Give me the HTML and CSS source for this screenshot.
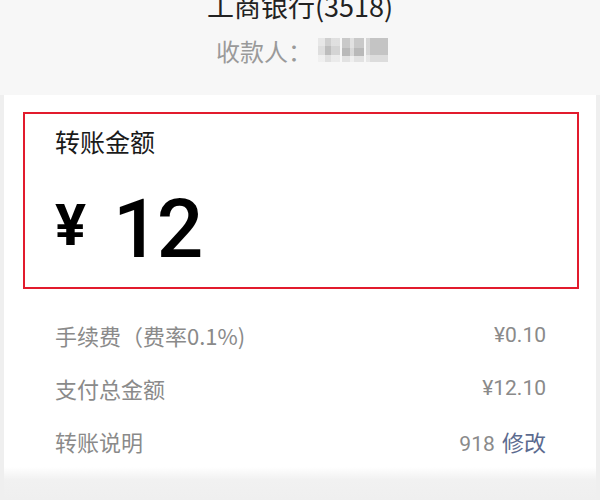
FILE: index.html
```html
<!DOCTYPE html>
<html lang="zh">
<head>
<meta charset="utf-8">
<link rel="stylesheet" href="styles.css">
</head>
<body>
<div class="page">
  <header class="head">
    <div class="bank">工商银行(3518)</div>
    <div class="payee">
      <span class="payee-label">收款人：</span>
      <span class="blur"><i class="b1"></i><i class="b2"></i><i class="b3"></i></span>
    </div>
  </header>
  <section class="card">
    <div class="amount-box">
      <div class="amount-label">转账金额</div>
      <div class="amount">
        <span class="yen">¥</span>
        <span class="num">12</span>
      </div>
    </div>
    <div class="rows">
      <div class="row"><span class="k">手续费（费率0.1%)</span><span class="v">¥0.10</span></div>
      <div class="row"><span class="k">支付总金额</span><span class="v">¥12.10</span></div>
      <div class="row"><span class="k">转账说明</span><span class="v">918 <span class="edit">修改</span></span></div>
    </div>
  </section>
</div>
</body>
</html>
```

FILE: styles.css
```css
* { box-sizing: border-box; margin: 0; padding: 0; }
html, body { width: 600px; height: 500px; overflow: hidden; }
body {
  background: #efefef;
  font-family: "Roboto", "Noto Sans CJK SC", sans-serif;
}
.page {
  height: 500px;
  display: flex;
  flex-direction: column;
}
.head {
  background: #f7f7f7;
  height: 95px;
  display: flex;
  flex-direction: column;
  align-items: center;
}
.bank {
  font-family: "Noto Sans CJK SC", sans-serif;
  font-size: 27px;
  line-height: 36px;
  margin-top: -12px;
  color: #222;
}
.payee {
  display: flex;
  align-items: center;
  margin-top: 10px;
  height: 32px;
}
.payee-label {
  font-family: "Noto Sans CJK SC", sans-serif;
  font-size: 24px;
  color: #9a9a9a;
  margin-left: 4px;
}
.blur {
  display: flex;
  margin-left: 6px;
  gap: 2px;
}
.blur i {
  display: block;
  width: 22px;
  height: 24px;
  background:
    linear-gradient(90deg, rgba(255,255,255,0.5) 0 30%, transparent 30% 60%, rgba(255,255,255,0.35) 60% 100%),
    linear-gradient(180deg, #cfcfcf 0 35%, #bdbdbd 35% 70%, #e0e0e0 70% 100%);
}
.blur .b2 { background:
    linear-gradient(90deg, transparent 0 35%, rgba(255,255,255,0.45) 35% 55%, transparent 55%),
    linear-gradient(180deg, #c9c9c9 0 40%, #b9b9b9 40% 75%, #e2e2e2 75%); }
.blur .b3 { background:
    linear-gradient(90deg, rgba(255,255,255,0.3) 0 20%, transparent 20%),
    linear-gradient(180deg, #c4c4c4 0 70%, #dcdcdc 70%); }
.card {
  flex: 1;
  margin: 0 4px;
  padding: 17px 17px 0 19px;
  background: linear-gradient(180deg, #fff 0, #fff 372px, #f1f1f1 385px, #efefef 100%);
}
.amount-box {
  border: 2px solid #e21b2d;
  height: 177px;
  padding: 11px 0 0 30px;
}
.amount-label {
  font-family: "Noto Sans CJK SC", sans-serif;
  font-size: 25px;
  line-height: 32px;
  color: #1a1a1a;
}
.amount {
  display: flex;
  align-items: center;
  height: 84px;
  margin-top: 30px;
  color: #000;
}
.yen {
  font-family: "Roboto", sans-serif;
  font-weight: 700;
  font-size: 58px;
  line-height: 1;
  margin-top: -8px;
}
.num {
  font-family: "Roboto", sans-serif;
  font-weight: 500;
  font-size: 82px;
  line-height: 1;
  margin-left: 27px;
  letter-spacing: -3px;
}
.rows {
  padding: 19px 33px 0 32px;
  display: flex;
  flex-direction: column;
}
.row {
  display: flex;
  justify-content: space-between;
  align-items: center;
  height: 53px;
  font-size: 22px;
  color: #8a8a8a;
}
.k { font-family: "Noto Sans CJK SC", sans-serif; }
.v { font-family: "Roboto", "Noto Sans CJK SC", sans-serif; font-size: 21px; }
.edit {
  font-family: "Noto Sans CJK SC", sans-serif;
  font-size: 22px;
  color: #5c6b8f;
  margin-left: 2px;
}
```
